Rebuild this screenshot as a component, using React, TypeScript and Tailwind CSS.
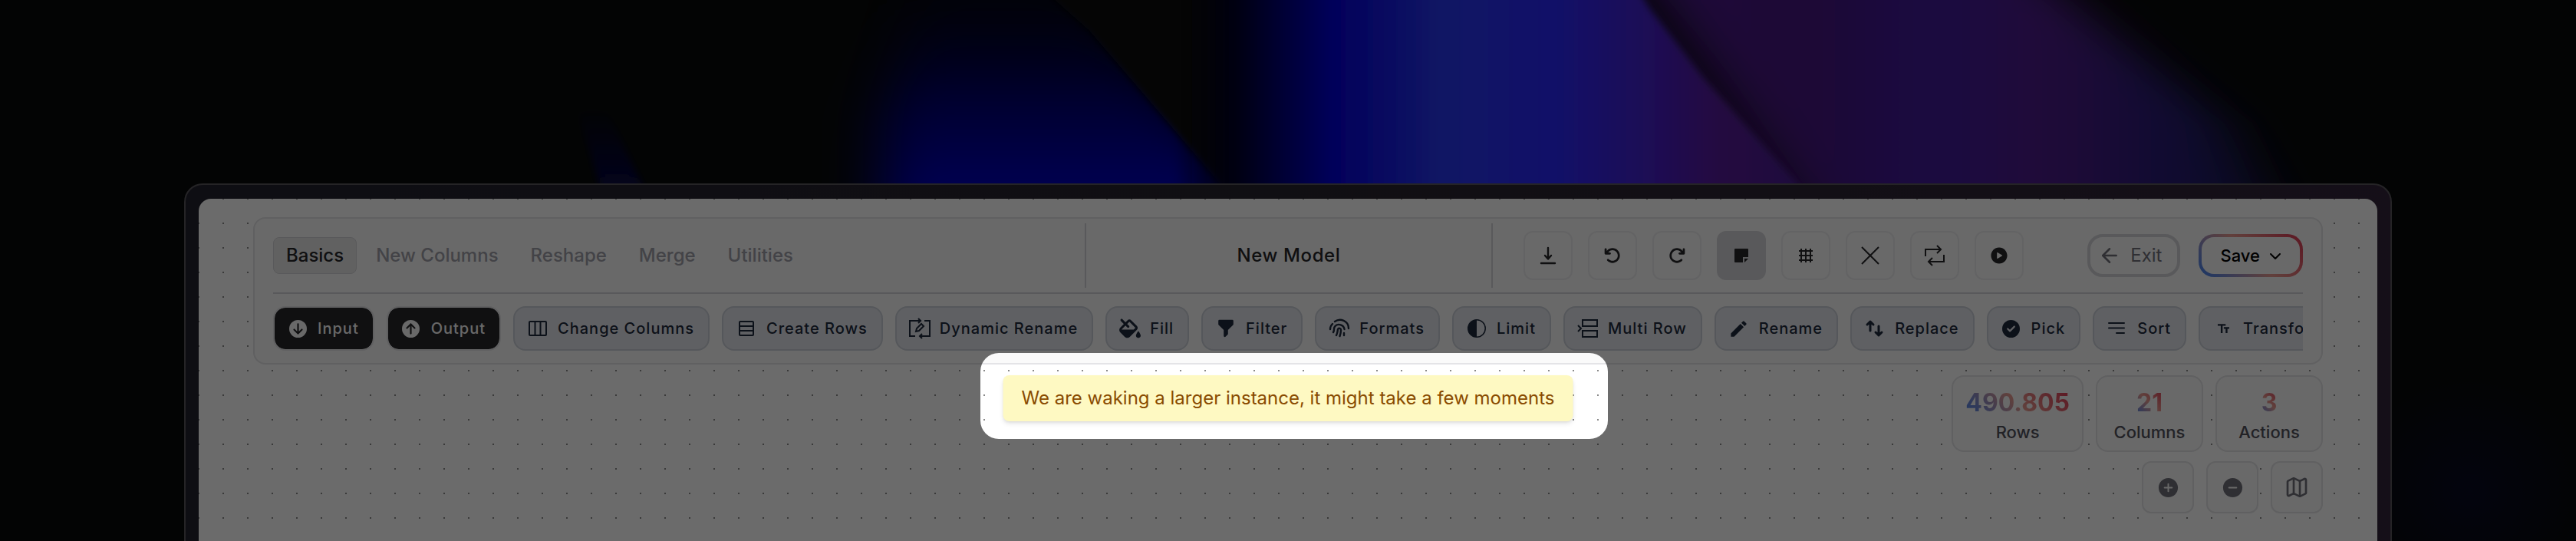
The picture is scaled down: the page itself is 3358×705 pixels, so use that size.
import type { ReactNode } from "react";
import { BsCircleHalf } from "react-icons/bs";
import {
  FaArrowRotateLeft,
  FaArrowRotateRight,
  FaChevronDown,
  FaCircleArrowDown,
  FaCircleArrowUp,
  FaCircleCheck,
  FaFillDrip,
} from "react-icons/fa6";
import { HiFilter } from "react-icons/hi";
import { IoAddCircle, IoPlayCircle, IoRemoveCircle } from "react-icons/io5";
import { LuArrowLeft, LuMap } from "react-icons/lu";
import { MdEdit, MdTextFields } from "react-icons/md";

interface GlyphProps {
  children: ReactNode;
  strokeWidth?: number;
}

function Glyph({ children, strokeWidth = 2 }: GlyphProps) {
  return (
    <svg
      width={28}
      height={28}
      viewBox="0 0 28 28"
      fill="none"
      stroke="currentColor"
      strokeWidth={strokeWidth}
      aria-hidden="true"
    >
      {children}
    </svg>
  );
}

const TABS = ["Basics", "New Columns", "Reshape", "Merge", "Utilities"];

const ACTIONS: { label: string; icon: ReactNode; dark?: boolean }[] = [
  { label: "Input", icon: <FaCircleArrowDown size={23} />, dark: true },
  { label: "Output", icon: <FaCircleArrowUp size={23} />, dark: true },
  {
    label: "Change Columns",
    icon: (
      <Glyph>
        <rect x="3" y="5" width="22" height="18" rx="1" />
        <path d="M10.500 5v18M17.500 5v18" />
      </Glyph>
    ),
  },
  {
    label: "Create Rows",
    icon: (
      <Glyph>
        <rect x="5" y="5" width="18" height="18" rx="1" />
        <path d="M5 11h18M5 17h18" />
      </Glyph>
    ),
  },
  {
    label: "Dynamic Rename",
    icon: (
      <Glyph>
        <path d="M16 4H1v20h7M20 4h7v20H14M12 1l3 3-3 3M17 21l-3 3 3 3" />
        <path d="M9 18l1-4 6-6 3 3-6 6z" />
      </Glyph>
    ),
  },
  { label: "Fill", icon: <FaFillDrip size={28} /> },
  { label: "Filter", icon: <HiFilter size={28} /> },
  {
    label: "Formats",
    icon: (
      <Glyph strokeWidth={2.4}>
        <g strokeLinecap="round">
          <path d="M2 15c0-3 1-5 3-7M8 5c7-5 18-1 18 9" />
          <path d="M6 19c2-3 0-5 2-7.500 4-5 12-2 12.500 3.500" />
          <path d="M10 23c2-4 1.500-6 2-8 1-2 4-1.500 4 1 0 3-.5 5-1.500 8" />
          <path d="M20 20v3" />
        </g>
      </Glyph>
    ),
  },
  { label: "Limit", icon: <BsCircleHalf size={24} /> },
  {
    label: "Multi Row",
    icon: (
      <Glyph>
        <path d="M7 3h19v8H7zM7 17h19v8H7zM1 10l4 4-4 4" />
      </Glyph>
    ),
  },
  { label: "Rename", icon: <MdEdit size={27} /> },
  {
    label: "Replace",
    icon: (
      <Glyph strokeWidth={3}>
        <path
          d="M8 17V5M4 9l4-4 4 4M19 11v12M15 19l4 4 4-4"
          strokeLinecap="round"
          strokeLinejoin="round"
        />
      </Glyph>
    ),
  },
  { label: "Pick", icon: <FaCircleCheck size={23} /> },
  {
    label: "Sort",
    icon: (
      <Glyph>
        <path d="M3 7h20M3 13.500h20M13 20h10" strokeLinecap="round" />
      </Glyph>
    ),
  },
  { label: "Transform", icon: <MdTextFields size={19} /> },
];

const TOOLS: { label: string; icon: ReactNode; active?: boolean }[] = [
  {
    label: "Download",
    icon: (
      <Glyph strokeWidth={2.4}>
        <path
          d="M14 4v14M10 14l4 4.500 4-4.500M5 24h18"
          strokeLinecap="round"
          strokeLinejoin="round"
        />
      </Glyph>
    ),
  },
  { label: "Undo", icon: <FaArrowRotateLeft size={22} /> },
  { label: "Redo", icon: <FaArrowRotateRight size={22} /> },
  {
    label: "Notes",
    icon: (
      <Glyph strokeWidth={0}>
        <path
          d="M6 5h16q1 0 1 1v10h-7v7H6q-1 0-1-1V6q0-1 1-1zM18 23v-5h5z"
          fill="currentColor"
        />
      </Glyph>
    ),
    active: true,
  },
  {
    label: "Grid",
    icon: (
      <Glyph>
        <path d="M8 5v18M14 5v18M20 5v18M5 8h18M5 14h18M5 20h18" />
      </Glyph>
    ),
  },
  {
    label: "Clear",
    icon: (
      <Glyph>
        <path d="M3 3l22 22M25 3L3 25" />
      </Glyph>
    ),
  },
  {
    label: "Loop",
    icon: (
      <Glyph>
        <path d="M2 15V6h20M17 1l5 5-5 5M26 13v9H6M11 17l-5 5 5 5" />
      </Glyph>
    ),
  },
  { label: "Run", icon: <IoPlayCircle size={26} /> },
];

const STATS = [
  { label: "Rows", value: "490.805" },
  { label: "Columns", value: "21" },
  { label: "Actions", value: "3" },
];

const ZOOM_CONTROLS = [
  { label: "Zoom in", icon: <IoAddCircle size={31} /> },
  { label: "Zoom out", icon: <IoRemoveCircle size={31} /> },
  { label: "Toggle map", icon: <LuMap size={32} /> },
];

function Aurora() {
  return (
    <svg
      className="absolute inset-0 h-full w-full"
      viewBox="0 0 3358 705"
      preserveAspectRatio="none"
      aria-hidden="true"
    >
      <defs>
        <linearGradient id="beam" x1="1530" x2="2360" y1="0" y2="0" gradientUnits="userSpaceOnUse">
          <stop offset="0" stopColor="#000008" stopOpacity="0" />
          <stop offset="0.1" stopColor="#02022c" />
          <stop offset="0.25" stopColor="#0400d8" />
          <stop offset="0.42" stopColor="#2836ee" />
          <stop offset="0.6" stopColor="#2a26f8" />
          <stop offset="0.74" stopColor="#4420cc" />
          <stop offset="0.86" stopColor="#561c98" />
          <stop offset="1" stopColor="#461c90" />
        </linearGradient>
        <linearGradient id="veil" x1="2140" x2="2980" y1="0" y2="0" gradientUnits="userSpaceOnUse">
          <stop offset="0" stopColor="#4a1a90" />
          <stop offset="0.25" stopColor="#46187c" />
          <stop offset="0.45" stopColor="#3c1a9c" />
          <stop offset="0.62" stopColor="#501c88" />
          <stop offset="0.8" stopColor="#281c78" />
          <stop offset="1" stopColor="#181848" />
        </linearGradient>
        <linearGradient id="lobe" x1="0" x2="0" y1="0" y2="240" gradientUnits="userSpaceOnUse">
          <stop offset="0" stopColor="#040820" stopOpacity="0.5" />
          <stop offset="0.5" stopColor="#040468" />
          <stop offset="1" stopColor="#0404bc" />
        </linearGradient>
        <linearGradient id="streak" x1="0" x2="0" y1="140" y2="250" gradientUnits="userSpaceOnUse">
          <stop offset="0" stopColor="#080840" stopOpacity="0" />
          <stop offset="1" stopColor="#080848" />
        </linearGradient>
        <radialGradient id="glow">
          <stop offset="0" stopColor="#080a22" />
          <stop offset="1" stopColor="#080a22" stopOpacity="0" />
        </radialGradient>
        <filter id="soft" x="-30%" y="-30%" width="160%" height="160%">
          <feGaussianBlur stdDeviation="38 16" />
        </filter>
        <filter id="edge" x="-20%" y="-20%" width="140%" height="140%">
          <feGaussianBlur stdDeviation="5" />
        </filter>
      </defs>
      <path d="M752 140L790 140L850 270H790z" fill="url(#streak)" filter="url(#edge)" />
      <path
        d="M1190-40H1400L1480 80L1640 260V320H1150V160z"
        fill="url(#lobe)"
        filter="url(#soft)"
      />
      <path
        d="M1330-40L1420 40L1480 110L1596 246L1610 300H1760V-40z"
        fill="#080a0a"
        filter="url(#edge)"
      />
      <path
        d="M2110-80H2600L2760 50L2900 160L2990 320H2380z"
        fill="url(#veil)"
        filter="url(#soft)"
      />
      <path
        d="M1530-40H2120L2150 10L2220 100L2350 246V320H1530z"
        fill="url(#beam)"
        filter="url(#edge)"
      />
      <ellipse cx="3220" cy="640" rx="160" ry="150" fill="url(#glow)" />
    </svg>
  );
}

function Toolbar() {
  return (
    <section className="rounded-2xl border-2 border-zinc-200 bg-[#fafafa] px-6 pb-4 pt-[6px]">
      <div className="flex items-center border-b-2 border-zinc-300 pb-[6px]">
        <nav className="flex w-2/5 gap-2">
          {TABS.map((tab, index) => (
            <button
              key={tab}
              className={`h-12 rounded-lg border px-4 text-2xl font-medium ${
                index === 0
                  ? "border-zinc-300 bg-[#e8e8e8] text-zinc-800"
                  : "border-transparent text-zinc-400"
              }`}
            >
              {tab}
            </button>
          ))}
        </nav>
        <div className="flex h-[84px] w-1/5 items-center justify-center border-l-2 border-zinc-300">
          <h1 className="text-2xl font-medium tracking-wide text-zinc-800">New Model</h1>
        </div>
        <div className="flex h-[84px] w-2/5 items-center justify-between border-l-2 border-zinc-300 pl-10">
          <div className="flex gap-5">
            {TOOLS.map((tool) => (
              <button
                key={tool.label}
                aria-label={tool.label}
                className={`flex size-16 items-center justify-center rounded-xl border-2 text-zinc-800 ${
                  tool.active ? "border-zinc-300 bg-[#d4d4d8]" : "border-[#ececee]"
                }`}
              >
                {tool.icon}
              </button>
            ))}
          </div>
          <div className="flex gap-6">
            <button className="flex h-14 items-center gap-3 rounded-[20px] border-4 border-zinc-300 pl-[10px] pr-5 text-2xl text-zinc-500">
              <LuArrowLeft size={30} />
              Exit
            </button>
            <button className="flex h-14 items-center rounded-[20px] bg-linear-[45deg,#3b82f6,#e69a90,#dc3550] p-1 text-[22px] font-medium text-black">
              <span className="flex h-full items-center gap-3 rounded-2xl bg-[#fafafa] px-6">
                Save
                <FaChevronDown size={16} />
              </span>
            </button>
          </div>
        </div>
      </div>
      <div className="mt-4 flex gap-4 overflow-hidden">
        {ACTIONS.map((action) => (
          <button
            key={action.label}
            className={`flex h-[58px] shrink-0 items-center gap-3 rounded-2xl border-2 pl-4 pr-[18px] text-xl font-medium tracking-wider ${
              action.dark
                ? "border-zinc-200 bg-[#27272a] bg-clip-padding text-zinc-50"
                : "border-[#cbd0d8] bg-[#e3e5eb] text-slate-800"
            }`}
          >
            <span className="flex size-7 items-center justify-center">{action.icon}</span>
            {action.label}
          </button>
        ))}
      </div>
    </section>
  );
}

export default function App() {
  return (
    <div className="relative min-h-screen overflow-hidden bg-[#080a0a] px-60 pt-[239px] font-['Inter',sans-serif]">
      <Aurora />
      <main className="relative h-[calc(100vh-239px)] rounded-t-3xl border-2 border-b-0 border-[#58565c] bg-linear-to-r from-[#22222e] via-[#28242e] to-[#32243a] px-[17px] pt-[18px]">
        <div className="h-full rounded-t-2xl bg-white bg-[radial-gradient(circle,#8a8a8a_1px,transparent_1px)] bg-[size:32px_32px] bg-[position:-16px_-16px] px-[71px] pt-6">
          <Toolbar />
          <div className="mt-[14px] flex justify-end gap-4">
            {STATS.map((stat) => (
              <div
                key={stat.label}
                className="flex h-[100px] min-w-[140px] flex-col items-center rounded-2xl border-2 border-zinc-200 bg-[#fafafa] px-4 pt-[14px]"
              >
                <strong className="bg-linear-[45deg,#3b82f6,#e69a90,#dc3550] bg-clip-text text-[32px] font-bold leading-10 text-transparent">
                  {stat.value}
                </strong>
                <span className="text-[22px] font-medium leading-9 text-zinc-600">{stat.label}</span>
              </div>
            ))}
          </div>
          <div className="mt-3 flex justify-end gap-4">
            {ZOOM_CONTROLS.map((control) => (
              <button
                key={control.label}
                aria-label={control.label}
                className="flex size-[68px] items-center justify-center rounded-xl border-2 border-zinc-200 bg-[#fafafa] text-zinc-500"
              >
                {control.icon}
              </button>
            ))}
          </div>
        </div>
      </main>
      {/* everything outside the highlighted area is dimmed by the spread shadow */}
      <div className="pointer-events-none absolute inset-x-0 top-[460px] flex justify-center pl-4">
        <div className="h-28 w-[818px] rounded-3xl shadow-[0_0_0_4000px_rgba(0,0,0,0.58)]" />
      </div>
      <div
        role="status"
        className="absolute left-1/2 top-[489px] -translate-x-1/2 whitespace-nowrap rounded-lg bg-yellow-100 px-6 py-3 text-2xl leading-9 text-yellow-800 shadow-md"
      >
        We are waking a larger instance, it might take a few moments
      </div>
    </div>
  );
}
